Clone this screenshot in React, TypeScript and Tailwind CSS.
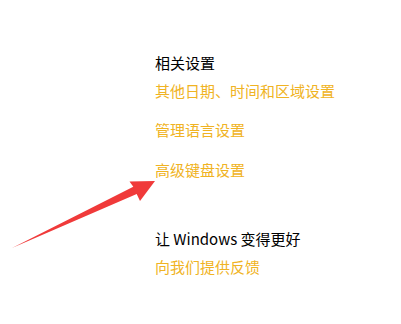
export default function App() {
  const link = "text-[15px] leading-5 text-[#f0b323]";
  return (
    <div
      className="relative w-[401px] h-[324px] bg-white overflow-hidden"
      style={{ fontFamily: '"Noto Sans CJK SC", "Noto Sans", sans-serif' }}
    >
      <div className="flex flex-col pl-[155px] pt-[53px]">
        <div className="text-[15px] leading-5 text-black">相关设置</div>
        <div className={`${link} mt-2`}>其他日期、时间和区域设置</div>
        <div className={`${link} mt-[19px]`}>管理语言设置</div>
        <div className={`${link} mt-5`}>高级键盘设置</div>
        <div className="text-[15px] leading-5 text-black mt-[49px]">让 Windows 变得更好</div>
        <div className={`${link} mt-2`}>向我们提供反馈</div>
      </div>

      {/* red annotation arrow */}
      <svg className="absolute left-0 top-0" width="401" height="324" viewBox="0 0 401 324">
        <polygon
          points="12,248 133.3,186.8 129.5,181.5 155,181 140,201 136.7,194"
          fill="#f03a3a"
        />
      </svg>
    </div>
  );
}
